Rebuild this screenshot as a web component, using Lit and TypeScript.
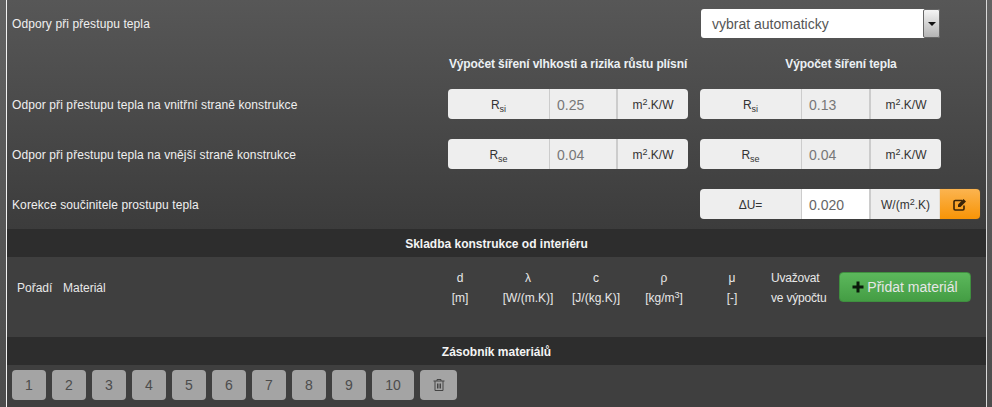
import { LitElement, html, css } from "lit";
import { customElement } from "lit/decorators.js";

@customElement("app-root")
export class AppRoot extends LitElement {
  static styles = css`
    :host { display: block; height: 407px; overflow: hidden; background: linear-gradient(#626262, #4c4c4c); font-family: "Liberation Sans", Arial, sans-serif; font-size: 12px; color: #f0f0f0; letter-spacing: 0.1px; }
    .panel { margin-left: 6px; width: 979px; height: 407px; border-left: 1px solid #f2f2f2; border-right: 1px solid #d8d8d8; background: #3f3f3f; overflow: hidden; }
    .top { height: 229px; background: linear-gradient(#575757, #3c3c3c); box-sizing: border-box; padding: 9px 0 0 5px; }
    .row { display: grid; grid-template-columns: 436px 252px 1fr; align-items: center; height: 30px; margin-bottom: 20px; }
    .row.first-row { height: 29px; margin-bottom: 0; }
    .row.last-row { margin-bottom: 0; }
    .label { padding-top: 2px; }
    .heads { height: 20px; margin: 16px 0 15px; font-weight: bold; text-align: center; color: #ecf0f4; letter-spacing: -0.1px; white-space: nowrap; }
    .heads div:nth-child(2) { width: 240px; }
    .heads div:nth-child(3) { width: 282px; }
    .select { margin-left: 1px; width: 239px; height: 29px; box-sizing: border-box; border-radius: 3px; background: #fff; display: flex; align-items: center; justify-content: space-between; color: #555; font-size: 14px; letter-spacing: 0; padding: 0 0 0 11px; }
    .arrow { width: 17px; height: 29px; box-sizing: border-box; border: 1px solid #666; border-radius: 2px; background: linear-gradient(#f4f4f4, #b4b4b4); display: flex; align-items: center; justify-content: center; }
    .arrow i { border: 4px solid transparent; border-top: 4px solid #111; border-bottom: 0; }
    .group { display: flex; height: 30px; width: max-content; }
    .group > div { box-sizing: border-box; display: flex; align-items: center; justify-content: center; background: #eee; color: #333; letter-spacing: 0; padding-top: 2px; }
    .name { width: 102px; border-radius: 4px 0 0 4px; font-size: 12px; border-right: 1px solid #ccc; }
    .name sub { font-size: 9px; line-height: 0; vertical-align: -3px; }
    .group > .val { width: 66px; justify-content: flex-start; padding-left: 7px; font-size: 14px; color: #777; }
    .group.right > .val { width: 67px; }
    .group > .val.live { background: #fff; color: #666; }
    .unit { width: 72px; border-left: 2px solid #ccc; border-radius: 0 4px 4px 0; }
    .unit sup, .hdr sup { font-size: 9px; line-height: 0; vertical-align: 4px; }
    .group > .unit.mid { width: 71px; border-radius: 0; }
    .group > .edit { width: 40px; padding-top: 0; background: linear-gradient(#fbb450, #f89406); border-radius: 0 4px 4px 0; box-shadow: 0 0 1px #a0650a; }
    .band { height: 28px; background: #2d2d2d; text-align: center; font-weight: bold; line-height: 30px; color: #f4f4f4; letter-spacing: 0; }
    .hdr { height: 80px; display: grid; grid-template-columns: 10px 46px 363px repeat(5, 68px) 73px 1fr; grid-template-rows: 20px 20px; padding-top: 11px; box-sizing: border-box; line-height: 20px; color: #e8e8e8; letter-spacing: 0; }
    .tall { grid-row: 1 / 3; align-self: center; }
    .c { text-align: center; white-space: nowrap; }
    .first { grid-column: 2; }
    .mat { grid-column: 3; }
    .c1 { grid-column: 4; } .c2 { grid-column: 5; } .c3 { grid-column: 6; } .c4 { grid-column: 7; } .c5 { grid-column: 8; }
    .consider { grid-column: 9; grid-row: 1 / 3; padding-left: 5px; white-space: nowrap; letter-spacing: -0.2px; }
    .add { grid-column: 10; grid-row: 1 / 3; align-self: center; justify-self: start; margin-top: -2px; width: 132px; height: 30px; box-sizing: border-box; border-radius: 4px; background: linear-gradient(#5cb85c, #449d44); border: 1px solid #3f8f3f; color: #e6e6e6; font-size: 14px; display: flex; align-items: center; justify-content: center; gap: 3px; }
    .stack { display: flex; gap: 6px; padding: 5px 0 0 5px; }
    .stack div { box-sizing: border-box; width: 34px; height: 30px; border-radius: 4px; background: #a4a4a4; color: #4c4c4c; font-size: 14px; letter-spacing: 0; display: flex; align-items: center; justify-content: center; }
    .stack .wide { width: 42px; }
    .stack .bin { width: 37px; }
    svg { display: block; }
  `;

  private group(sub: string, val: string, right = false) {
    return html`<div class="group ${right ? "right" : ""}"><div class="name"><span>R<sub>${sub}</sub></span></div><div class="val">${val}</div><div class="unit"><span>m<sup>2</sup>.K/W</span></div></div>`;
  }

  render() {
    return html`<div class="panel">
      <div class="top">
        <div class="row first-row">
          <div>Odpory při přestupu tepla</div><div></div>
          <div class="select"><span>vybrat automaticky</span><span class="arrow"><i></i></span></div>
        </div>
        <div class="row heads"><div></div><div>Výpočet šíření vlhkosti a rizika růstu plísní</div><div>Výpočet šíření tepla</div></div>
        <div class="row"><div class="label">Odpor při přestupu tepla na vnitřní straně konstrukce</div>${this.group("si", "0.25")}${this.group("si", "0.13", true)}</div>
        <div class="row"><div class="label">Odpor při přestupu tepla na vnější straně konstrukce</div>${this.group("se", "0.04")}${this.group("se", "0.04", true)}</div>
        <div class="row last-row"><div class="label">Korekce součinitele prostupu tepla</div><div></div>
          <div class="group right"><div class="name">ΔU=</div><div class="val live">0.020</div><div class="unit mid"><span>W/(m<sup>2</sup>.K)</span></div>
            <div class="edit"><svg width="14" height="13" viewBox="0 0 14 13"><path d="M9 2.500H2.200A1.200 1.200 0 0 0 1 3.700v7.100A1.200 1.200 0 0 0 2.200 12h7.600A1.200 1.200 0 0 0 11 10.800V7.500" fill="none" stroke="#3a2408" stroke-width="1.600"/><path d="M5 6.500 10.500 1l2.500 2.500L7.500 9H5z" fill="#3a2408"/></svg></div></div>
        </div>
      </div>
      <div class="band">Skladba konstrukce od interiéru</div>
      <div class="hdr">
        <div class="first tall">Pořadí</div><div class="mat tall">Materiál</div>
        <div class="c c1">d</div><div class="c c2">λ</div><div class="c c3">c</div><div class="c c4">ρ</div><div class="c c5">μ</div>
        <div class="consider">Uvažovat<br />ve výpočtu</div>
        <div class="add"><svg width="12" height="12" viewBox="0 0 12 12"><path d="M4.500 0.500h3v4h4v3h-4v4h-3v-4h-4v-3h4z" fill="#0b1a0b"/></svg><span>Přidat materiál</span></div>
        <div class="c c1">[m]</div><div class="c c2">[W/(m.K)]</div><div class="c c3">[J/(kg.K)]</div><div class="c c4"><span>[kg/m<sup>3</sup>]</span></div><div class="c c5">[-]</div>
      </div>
      <div class="band">Zásobník materiálů</div>
      <div class="stack">
        ${["1", "2", "3", "4", "5", "6", "7", "8", "9"].map((n) => html`<div>${n}</div>`)}
        <div class="wide">10</div>
        <div class="bin"><svg width="12" height="14" viewBox="0 0 12 14" fill="none" stroke="#444" stroke-width="1"><path d="M0.500 3h11M4 3V1.500h4V3M2 3v9.500h8V3M4.500 5.500v5M6 5.500v5M7.500 5.500v5"/></svg></div>
      </div>
    </div>`;
  }
}
